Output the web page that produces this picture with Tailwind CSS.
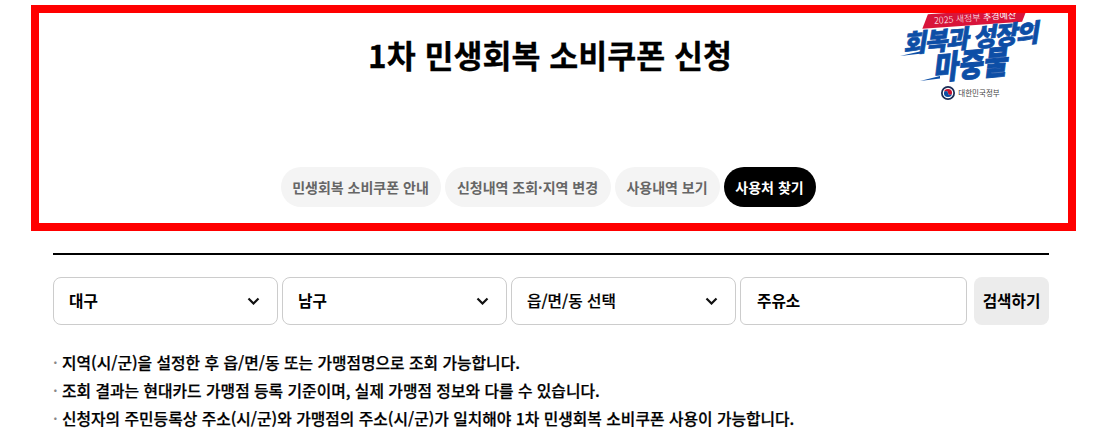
<!DOCTYPE html>
<html lang="ko">

<head>
  <meta charset="UTF-8">
  <title>1차 민생회복 소비쿠폰 신청</title>
  <script src="https://cdn.jsdelivr.net/npm/@tailwindcss/browser@4"></script>
</head>

<body class="bg-white text-black font-['Noto_Sans_CJK_KR','Noto_Sans',sans-serif] overflow-hidden">
  <div class="w-[1118px] h-[442px] overflow-hidden">
    <header class="relative mt-[5px] ml-[31px] w-[1045px] h-[226px] border-8 border-[#ff0000] overflow-hidden flex flex-col items-center">
      <h1 class="mt-[16px] ml-[-7px] text-[31.5px] leading-[50px] font-bold [-webkit-text-stroke:0.3px_#000]">1차 민생회복 소비쿠폰 신청</h1>
      <!-- campaign logo -->
      <div class="absolute left-[860px] top-[-2px] w-[146px] flex flex-col items-center">
        <div class="ml-[6px] w-[100px] h-[14px] -rotate-[4deg] -skew-x-[25deg] bg-[#d8143a] flex items-center justify-center text-[9px] leading-[14px] font-light text-white whitespace-nowrap">
          <span class="skew-x-[25deg]">2025 새정부 <b>추경예산</b></span>
        </div>
        <div class="mt-[-2px] -skew-x-[14deg] -rotate-[5deg] text-[25px] leading-[26px] font-black text-[#0d4ea6] [-webkit-text-stroke:0.7px_#0d4ea6] whitespace-nowrap tracking-[-1.5px]">회복과 성장의</div>
        <div class="mt-[0px] -skew-x-[14deg] -rotate-[5deg] scale-y-[1.2] text-[27px] leading-[28px] font-black text-[#0d4ea6] [-webkit-text-stroke:0.7px_#0d4ea6] whitespace-nowrap">마중물</div>
        <div class="mt-[9px] mr-[3px] flex items-center gap-[3px]">
          <svg width="14" height="14" viewBox="0 0 24 24">
            <circle cx="12" cy="12" r="12" fill="#1a2b55" />
            <circle cx="12" cy="12" r="9" fill="#fff" />
            <path d="M5 12a7 7 0 0 1 14 0a3.5 3.5 0 0 1-7 0a3.5 3.5 0 0 0-7 0Z" fill="#c8102e" />
            <path d="M5 12a3.5 3.5 0 0 1 7 0a3.5 3.5 0 0 0 7 0a7 7 0 0 1-14 0Z" fill="#0b4ea2" />
          </svg>
          <span class="text-[7.5px] leading-[10px] text-[#444]">대한민국정부</span>
        </div>
      </div>
      <!-- speed streaks around the logo lettering -->
      <svg class="absolute left-[855px] top-[0px]" width="155" height="75" viewBox="0 0 155 75" fill="#0d4ea6">
        <path d="M6 43l22-5 0 2.5Z" />
        <path d="M26 68l20-5 0 2.5Z" />
        <path d="M146 12l-18 3 0-2Z" />
      </svg>
      <nav class="mt-auto mb-[16px] ml-[-11px] flex gap-[4px] text-[14px] font-bold">
        <a class="h-[40px] w-[160px] rounded-full bg-[#f4f4f4] text-[#666] flex items-center justify-center">민생회복 소비쿠폰 안내</a>
        <a class="h-[40px] w-[166px] rounded-full bg-[#f4f4f4] text-[#666] flex items-center justify-center">신청내역 조회·지역 변경</a>
        <a class="h-[40px] w-[105px] rounded-full bg-[#f4f4f4] text-[#666] flex items-center justify-center">사용내역 보기</a>
        <a class="h-[40px] w-[92px] rounded-full bg-black text-white flex items-center justify-center">사용처 찾기</a>
      </nav>
    </header>

    <main class="ml-[53px] w-[996px]">
      <div class="mt-[22px] h-[2px] bg-black"></div>
      <form class="mt-[22px] flex h-[48px] text-[15.7px] font-medium">
        <div class="w-[225px] mr-[4px] border border-[#ccc] rounded-[8px] pl-[15px] pr-[17px] flex items-center justify-between font-bold">
          <span>대구</span>
          <svg width="13" height="8" viewBox="0 0 13 8" fill="none" stroke="#111" stroke-width="2.2"><path d="M1.5 1.5l5 5 5-5" /></svg>
        </div>
        <div class="w-[225px] mr-[4px] border border-[#ccc] rounded-[8px] pl-[15px] pr-[17px] flex items-center justify-between font-bold">
          <span>남구</span>
          <svg width="13" height="8" viewBox="0 0 13 8" fill="none" stroke="#111" stroke-width="2.2"><path d="M1.5 1.5l5 5 5-5" /></svg>
        </div>
        <div class="w-[225px] mr-[4px] border border-[#ccc] rounded-[8px] pl-[15px] pr-[17px] flex items-center justify-between [-webkit-text-stroke:0.2px_#000]">
          <span>읍/면/동 선택</span>
          <svg width="13" height="8" viewBox="0 0 13 8" fill="none" stroke="#111" stroke-width="2.2"><path d="M1.5 1.5l5 5 5-5" /></svg>
        </div>
        <div class="w-[227px] mr-[7px] border border-[#ccc] rounded-[6px] pl-[16px] flex items-center font-bold">주유소</div>
        <button type="button" class="w-[75px] rounded-[8px] bg-[#ececec] font-bold">검색하기</button>
      </form>
      <ul class="mt-[24px] text-[15.8px] leading-[28px] font-medium [-webkit-text-stroke:0.25px_#000]">
        <li class="flex"><span class="w-[9px] text-[#888] [-webkit-text-stroke:0]">·</span>지역(시/군)을 설정한 후 읍/면/동 또는 가맹점명으로 조회 가능합니다.</li>
        <li class="flex"><span class="w-[9px] text-[#888] [-webkit-text-stroke:0]">·</span>조회 결과는 현대카드 가맹점 등록 기준이며, 실제 가맹점 정보와 다를 수 있습니다.</li>
        <li class="flex"><span class="w-[9px] text-[#888] [-webkit-text-stroke:0]">·</span>신청자의 주민등록상 주소(시/군)와 가맹점의 주소(시/군)가 일치해야 1차 민생회복 소비쿠폰 사용이 가능합니다.</li>
      </ul>
    </main>
  </div>
</body>

</html>
